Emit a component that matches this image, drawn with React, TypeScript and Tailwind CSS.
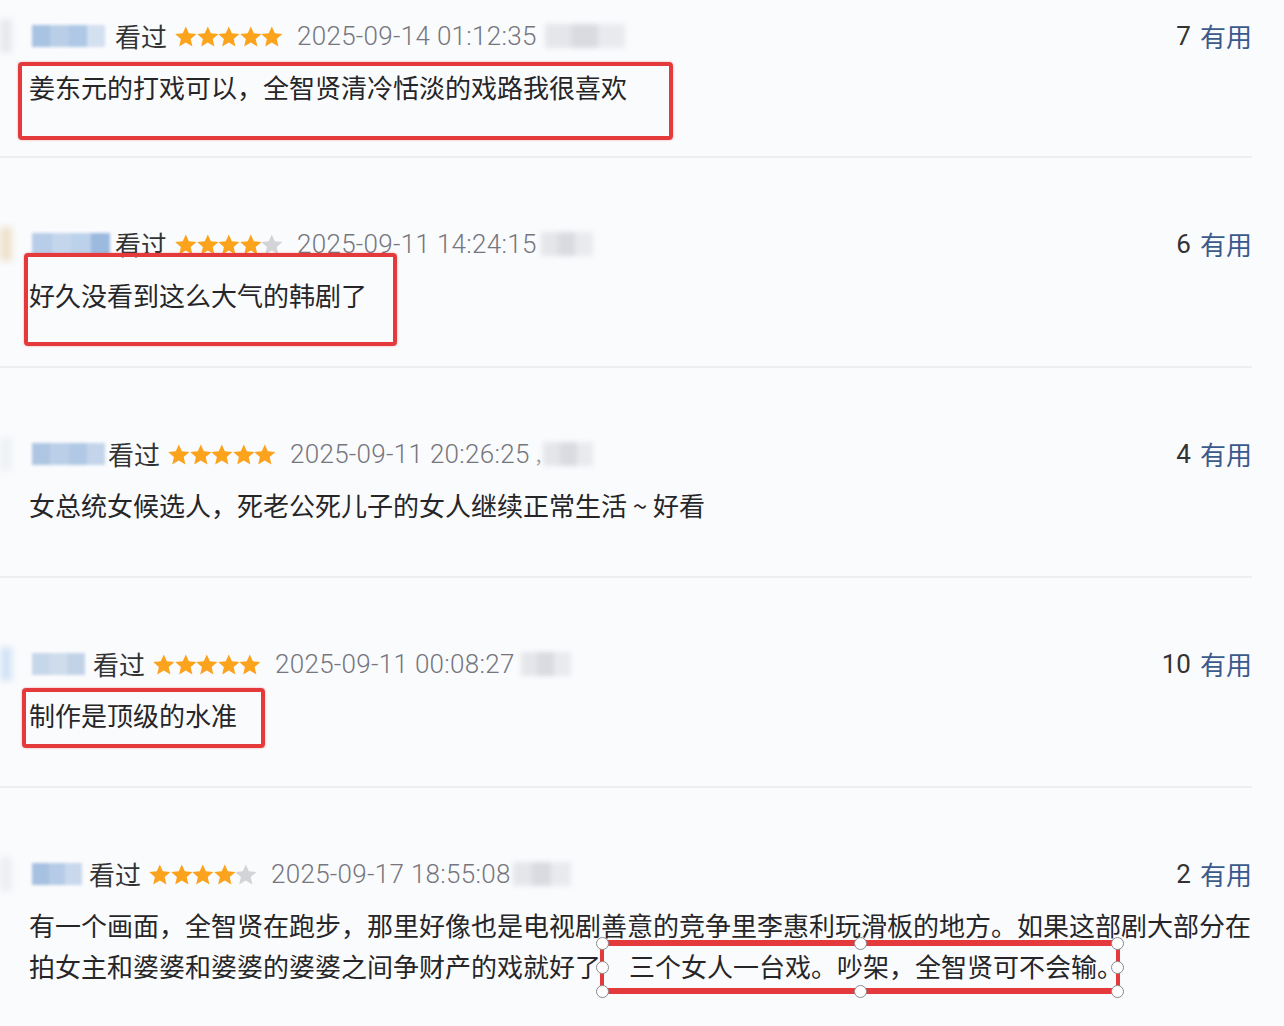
import React from 'react';

type Review = {
  rowCls: string;
  strip: string;
  avatar: string[];
  avatarCls: string;
  stars: number;
  date: string;
  tail: string;
  comma?: boolean;
  useful: number;
  body: React.ReactNode;
};

const STAR = 'M12 1.6l3 6.8 7.4.7-5.6 4.9 1.7 7.3L12 17.5l-6.5 3.8 1.7-7.3-5.6-4.9 7.4-.7z';

function Stars({ n }: { n: number }) {
  return (
    <div className="flex items-center mr-[14px] -ml-[2px]">
      {[0, 1, 2, 3, 4].map((i) => (
        <svg key={i} viewBox="1.4 1.4 21.2 20.2" className="w-[21.6px] h-[21px]">
          <path d={STAR} fill={i < n ? '#fba31d' : '#d3d4d8'} />
        </svg>
      ))}
    </div>
  );
}

const reviews: Review[] = [
  {
    rowCls: 'h-[158px] pt-[20px] border-b-2',
    strip: 'bg-[#e6e8ec]',
    avatar: ['bg-[#a9c3e2]', 'bg-[#b9cfe8]', 'bg-[#aec8e6]', 'bg-[#d3e0f0]'],
    avatarCls: 'w-[73px] mr-[10px]',
    stars: 5,
    date: '2025-09-14 01:12:35',
    tail: 'w-[80px] ml-[8px]',
    useful: 7,
    body: '姜东元的打戏可以，全智贤清冷恬淡的戏路我很喜欢',
  },
  {
    rowCls: 'h-[210px] pt-[70px] border-b-2',
    strip: 'bg-[#efe2cc]',
    avatar: ['bg-[#b7cde8]', 'bg-[#c4d6ec]', 'bg-[#bcd1ea]', 'bg-[#9cb9de]'],
    avatarCls: 'w-[78px] mr-[5px]',
    stars: 4,
    date: '2025-09-11 14:24:15',
    tail: 'w-[52px] ml-[4px]',
    useful: 6,
    body: '好久没看到这么大气的韩剧了',
  },
  {
    rowCls: 'h-[210px] pt-[70px] border-b-2',
    strip: 'bg-[#eef1f5]',
    avatar: ['bg-[#afc6e3]', 'bg-[#bccfe8]', 'bg-[#b2c9e5]', 'bg-[#c4d5eb]'],
    avatarCls: 'w-[73px] mr-[3px]',
    stars: 5,
    date: '2025-09-11 20:26:25',
    tail: 'w-[50px] ml-[2px]',
    comma: true,
    useful: 4,
    body: '女总统女候选人，死老公死儿子的女人继续正常生活 ~ 好看',
  },
  {
    rowCls: 'h-[210px] pt-[70px] border-b-2',
    strip: 'bg-[#d4e4f6]',
    avatar: ['bg-[#c7d7ea]', 'bg-[#cfdcec]', 'bg-[#c2d3e8]'],
    avatarCls: 'w-[53px] mr-[8px]',
    stars: 5,
    date: '2025-09-11 00:08:27',
    tail: 'w-[50px] ml-[6px]',
    useful: 10,
    body: '制作是顶级的水准',
  },
  {
    rowCls: 'h-[240px] pt-[70px]',
    strip: 'bg-[#eceef1]',
    avatar: ['bg-[#a7c1e1]', 'bg-[#b5cbe7]', 'bg-[#c9d8ec]'],
    avatarCls: 'w-[50px] mr-[7px]',
    stars: 4,
    date: '2025-09-17 18:55:08',
    tail: 'w-[58px] ml-[2px]',
    useful: 2,
    body: (
      <>
        有一个画面，全智贤在跑步，那里好像也是电视剧善意的竞争里李惠利玩滑板的地方。如果这部剧大部分在
        <br />
        拍女主和婆婆和婆婆的婆婆之间争财产的戏就好了
        <span className="ml-[28px]">三个女人一台戏。吵架，全智贤可不会输。</span>
      </>
    ),
  },
];

function Handle({ cls }: { cls: string }) {
  return (
    <span
      className={`absolute w-[13px] h-[13px] -ml-[6.5px] -mt-[6.5px] rounded-full bg-white border-[1.5px] border-[#8a8a8e] ${cls}`}
    />
  );
}

function Marks({ i }: { i: number }) {
  const box = 'absolute z-10 border-[#e53a3b] shadow-[0_0_2px_rgba(229,58,59,0.5)] pointer-events-none';
  if (i === 0) return <div className={`${box} left-[18px] top-[62px] w-[655px] h-[78px] border-[4px] rounded-[4px]`} />;
  if (i === 1) return <div className={`${box} left-[24px] top-[95px] w-[373px] h-[93px] border-[4px] rounded-[4px]`} />;
  if (i === 3) return <div className={`${box} left-[22px] top-[110px] w-[243px] h-[60px] border-[4px] rounded-[4px]`} />;
  if (i === 4)
    return (
      <div className="absolute z-10 left-[600px] top-[152px] w-[520px] h-[54px]">
        <div className="w-full h-full border-x-[4px] border-y-[6px] border-[#e53a3b]" />
        <Handle cls="left-[2px] top-[3px]" />
        <Handle cls="left-[260px] top-[3px]" />
        <Handle cls="left-[517px] top-[3px]" />
        <Handle cls="left-[2px] top-[27px]" />
        <Handle cls="left-[517px] top-[27px]" />
        <Handle cls="left-[2px] top-[51px]" />
        <Handle cls="left-[260px] top-[51px]" />
        <Handle cls="left-[517px] top-[51px]" />
      </div>
    );
  return null;
}

export default function App() {
  return (
    <div className="min-h-screen bg-[#fafbfd] font-['Noto_Sans_CJK_SC',sans-serif] overflow-hidden">
      <div className="w-[1252px]">
        {reviews.map((r, i) => (
          <div key={i} className={`relative border-[#eceef2] ${r.rowCls}`}>
            <div className="flex items-center h-[32px]">
              <div className={`w-[12px] h-[34px] blur-[3px] ${r.strip}`} />
              <div className={`ml-[20px] h-[22px] flex blur-[1.5px] ${r.avatarCls}`}>
                {r.avatar.map((c, k) => (
                  <div key={k} className={`flex-1 h-full ${c}`} />
                ))}
              </div>
              <span className="text-[26px] leading-[32px] text-[#333] mr-[10px]">看过</span>
              <Stars n={r.stars} />
              <span className="font-['Roboto',sans-serif] font-light tracking-[0.3px] text-[26px] leading-[32px] text-[#76767e]">{r.date}</span>
              {r.comma && <span className="ml-[6px] text-[20px] text-[#9a9aa0]">,</span>}
              <div className={`h-[24px] flex blur-[2.5px] ${r.tail}`}>
                <div className="flex-1 bg-[#e4e6ea]" />
                <div className="flex-1 bg-[#d9dbe0]" />
                <div className="flex-1 bg-[#e8eaee]" />
              </div>
              <div className="ml-auto flex items-center text-[26px] leading-[32px]">
                <span className="font-['Roboto',sans-serif] text-[#333]">{r.useful}</span>
                <span className="ml-[9px] text-[#3a5a8b]">有用</span>
              </div>
            </div>
            <p className="mt-[14px] pl-[29px] text-[26px] leading-[41px] text-[#262629] whitespace-nowrap">{r.body}</p>
            <Marks i={i} />
          </div>
        ))}
      </div>
    </div>
  );
}
